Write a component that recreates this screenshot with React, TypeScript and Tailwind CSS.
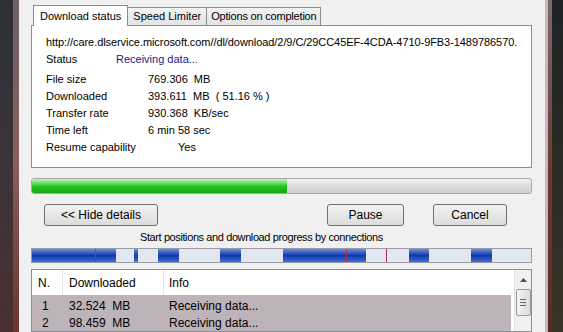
import React from "react";

const font = { fontFamily: '"Liberation Sans", Arial, sans-serif' };

const details = [
  { label: "File size", value: "769.306  MB" },
  { label: "Downloaded", value: "393.611  MB  ( 51.16 % )" },
  { label: "Transfer rate", value: "930.368  KB/sec" },
  { label: "Time left", value: "6 min 58 sec" },
];

// [start, end] in px from the bar's left edge
const segments = [
  [0, 84],
  [102, 106],
  [126, 147],
  [188, 209],
  [251, 334],
  [377, 397],
  [439, 460],
];
const marks = [63, 314, 354];

const rows = [
  { n: "1", size: "32.524  MB", info: "Receiving data..." },
  { n: "2", size: "98.459  MB", info: "Receiving data..." },
];

const App = () => {
  return (
    <div
      className="w-[563px] h-[332px] overflow-hidden flex text-[11px] text-black"
      style={font}
    >
      <div className="w-[13px] h-full bg-gradient-to-b from-[#2c3035] via-[#3a3438] to-[#4a2f30]" />
      <div className="w-[6px] h-full bg-gradient-to-b from-[#6c6266] via-[#8a5c58] to-[#6a3430]" />

      <div className="w-[526px] h-full bg-[#f0f0f0] flex flex-col pl-[12px] pr-[13px]">
        {/* tabs */}
        <div className="flex items-end h-[25px] pt-[4px] pl-[2px]">
          <div className="h-[21px] px-[6px] flex items-center bg-white border border-b-0 border-[#898c95] relative top-[1px] z-10 text-[11px]">
            Download status
          </div>
          <div className="h-[18px] px-[5px] flex items-center bg-gradient-to-b from-[#f3f3f3] to-[#e3e3e3] border border-l-0 border-b-0 border-[#898c95] text-[11px]">
            Speed Limiter
          </div>
          <div className="h-[18px] px-[4px] flex items-center bg-gradient-to-b from-[#f3f3f3] to-[#e3e3e3] border border-l-0 border-b-0 border-[#898c95] text-[11px] tracking-[-0.2px]">
            Options on completion
          </div>
        </div>

        {/* details panel */}
        <div className="h-[143px] bg-white border border-[#898c95] pl-[14px] pt-[8px]">
          <div className="h-[17px] whitespace-nowrap overflow-hidden tracking-[-0.07px]">
            http://care.dlservice.microsoft.com//dl/download/2/9/C/29CC45EF-4CDA-4710-9FB3-1489786570.
          </div>
          <div className="h-[17px] flex items-center">
            <span className="w-[70px]">Status</span>
            <span className="text-[#1c1c8a]">Receiving data...</span>
          </div>
          <div className="h-[3px]" />
          {details.map((d) => (
            <div key={d.label} className="h-[17px] flex items-center">
              <span className="w-[102px]">{d.label}</span>
              <span className="whitespace-pre">{d.value}</span>
            </div>
          ))}
          <div className="h-[17px] flex items-center">
            <span className="w-[132px]">Resume capability</span>
            <span>Yes</span>
          </div>
        </div>

        {/* overall progress */}
        <div className="mt-[10px] h-[16px] rounded-[3px] border border-[#a9a9a9] bg-gradient-to-b from-[#f2f2f2] via-[#dcdcdc] to-[#cfcfcf] overflow-hidden">
          <div className="h-full w-[255px] bg-gradient-to-b from-[#b9f5b9] via-[#1fc81f] to-[#17a617]" />
        </div>

        {/* buttons */}
        <div className="mt-[10px] h-[22px] flex">
          <button className="ml-[13px] w-[114px] h-[22px] rounded-[3px] border border-[#707070] bg-gradient-to-b from-[#f3f3f3] to-[#dcdcdc] text-[12px]">
            &lt;&lt; Hide details
          </button>
          <button className="ml-[169px] w-[77px] h-[22px] rounded-[3px] border border-[#707070] bg-gradient-to-b from-[#f3f3f3] to-[#dcdcdc] text-[12px]">
            Pause
          </button>
          <button className="ml-[29px] w-[74px] h-[22px] rounded-[3px] border border-[#707070] bg-gradient-to-b from-[#f3f3f3] to-[#dcdcdc] text-[12px]">
            Cancel
          </button>
        </div>

        <div className="mt-[4px] h-[15px] pl-[109px] whitespace-nowrap text-[11px] leading-[15px] tracking-[-0.4px]">
          Start positions and download progress by connections
        </div>

        {/* connections bar */}
        <div className="mt-[3px] h-[15px] border border-[#9a9aa4] bg-[#e2e7f2] relative overflow-hidden">
          {segments.map(([s, e]) => (
            <div
              key={s}
              className="absolute top-0 bottom-0 bg-gradient-to-b from-[#6b8fe2] via-[#1637a8] to-[#3a6fd8]"
              style={{ left: s, width: e - s }}
            />
          ))}
          {marks.map((m) => (
            <div
              key={m}
              className="absolute top-0 bottom-0 w-px bg-[#b03048]"
              style={{ left: m }}
            />
          ))}
        </div>

        {/* connections list */}
        <div className="mt-[6px] flex-1 border border-[#8e8f94] bg-white flex">
          <div className="flex-1 flex flex-col">
            <div className="h-[25px] flex items-center text-[12px]">
              <span className="w-[31px] pl-[6px] border-r border-[#e6e6e6] h-full flex items-center">
                N.
              </span>
              <span className="w-[101px] pl-[6px] border-r border-[#e6e6e6] h-full flex items-center">
                Downloaded
              </span>
              <span className="pl-[5px]">Info</span>
            </div>
            <div className="flex-1 bg-[#bdb4ba] mr-[3px] pt-[2px]">
              {rows.map((r) => (
                <div key={r.n} className="h-[17px] flex items-center text-[12px]">
                  <span className="w-[31px] pl-[10px]">{r.n}</span>
                  <span className="w-[101px] pl-[6px] whitespace-pre">{r.size}</span>
                  <span className="pl-[5px]">{r.info}</span>
                </div>
              ))}
            </div>
          </div>
          <div className="w-[17px] bg-[#f0f0f0] border-l border-[#e2e2e2] flex flex-col items-center">
            <div className="h-[19px] flex items-center justify-center">
              <svg width="7" height="4" viewBox="0 0 7 4">
                <path d="M0 4 L3.5 0 L7 4 Z" fill="#505050" />
              </svg>
            </div>
            <div className="w-[15px] h-[27px] rounded-[2px] border border-[#9a9a9a] bg-gradient-to-r from-[#f4f4f4] to-[#dadada] flex flex-col items-center justify-center gap-[2px]">
              <div className="w-[6px] h-px bg-[#666]" />
              <div className="w-[6px] h-px bg-[#666]" />
              <div className="w-[6px] h-px bg-[#666]" />
            </div>
          </div>
        </div>
      </div>

      <div className="w-[3px] h-full bg-[#c8b8ba]" />
      <div className="w-[4px] h-full bg-gradient-to-b from-[#7a6a6c] via-[#6a3a38] to-[#5a2828]" />
      <div className="flex-1 h-full bg-gradient-to-b from-[#1f2326] via-[#2c2a24] to-[#3a3428]" />
    </div>
  );
};

export default App;
